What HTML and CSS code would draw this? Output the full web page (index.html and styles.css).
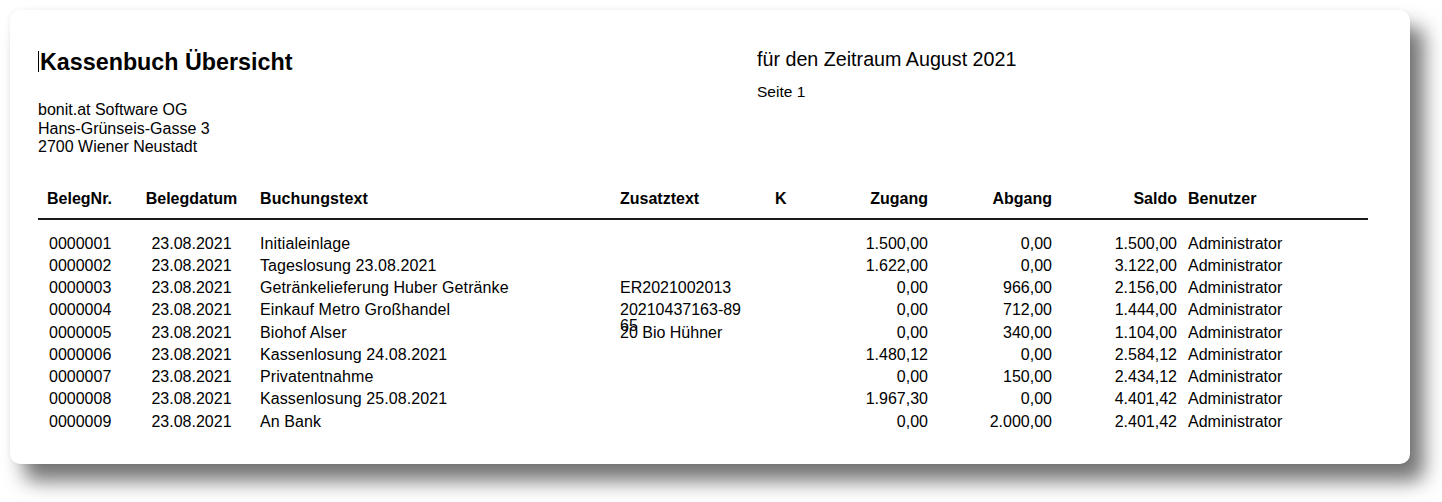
FILE: index.html
```html
<!DOCTYPE html>
<html lang="de">
<head>
    <meta charset="UTF-8">
    <title>Kassenbuch Übersicht</title>
    <link rel="stylesheet" href="styles.css">
</head>
<body>
    <div class="sheet">
        <div class="head">
            <div class="head-left">
                <h1 class="title"><span class="caret"></span>Kassenbuch Übersicht</h1>
                <div class="address">
                    <p>bonit.at Software OG</p>
                    <p>Hans-Grünseis-Gasse 3</p>
                    <p>2700 Wiener Neustadt</p>
                </div>
            </div>
            <div class="head-right">
                <p class="period">für den Zeitraum August 2021</p>
                <p class="page">Seite 1</p>
            </div>
        </div>

        <div class="row row-head">
            <div class="c-nr">BelegNr.</div>
            <div class="c-date">Belegdatum</div>
            <div class="c-text">Buchungstext</div>
            <div class="c-extra">Zusatztext</div>
            <div class="c-k">K</div>
            <div class="c-num">Zugang</div>
            <div class="c-num">Abgang</div>
            <div class="c-num">Saldo</div>
            <div class="c-user">Benutzer</div>
        </div>

        <div class="rows">
            <div class="row">
                <div class="c-nr">0000001</div>
                <div class="c-date">23.08.2021</div>
                <div class="c-text">Initialeinlage</div>
                <div class="c-extra"></div>
                <div class="c-k"></div>
                <div class="c-num">1.500,00</div>
                <div class="c-num">0,00</div>
                <div class="c-num">1.500,00</div>
                <div class="c-user">Administrator</div>
            </div>
            <div class="row">
                <div class="c-nr">0000002</div>
                <div class="c-date">23.08.2021</div>
                <div class="c-text">Tageslosung 23.08.2021</div>
                <div class="c-extra"></div>
                <div class="c-k"></div>
                <div class="c-num">1.622,00</div>
                <div class="c-num">0,00</div>
                <div class="c-num">3.122,00</div>
                <div class="c-user">Administrator</div>
            </div>
            <div class="row">
                <div class="c-nr">0000003</div>
                <div class="c-date">23.08.2021</div>
                <div class="c-text">Getränkelieferung Huber Getränke</div>
                <div class="c-extra">ER2021002013</div>
                <div class="c-k"></div>
                <div class="c-num">0,00</div>
                <div class="c-num">966,00</div>
                <div class="c-num">2.156,00</div>
                <div class="c-user">Administrator</div>
            </div>
            <div class="row">
                <div class="c-nr">0000004</div>
                <div class="c-date">23.08.2021</div>
                <div class="c-text">Einkauf Metro Großhandel</div>
                <div class="c-extra">20210437163-8965</div>
                <div class="c-k"></div>
                <div class="c-num">0,00</div>
                <div class="c-num">712,00</div>
                <div class="c-num">1.444,00</div>
                <div class="c-user">Administrator</div>
            </div>
            <div class="row">
                <div class="c-nr">0000005</div>
                <div class="c-date">23.08.2021</div>
                <div class="c-text">Biohof Alser</div>
                <div class="c-extra">20 Bio Hühner</div>
                <div class="c-k"></div>
                <div class="c-num">0,00</div>
                <div class="c-num">340,00</div>
                <div class="c-num">1.104,00</div>
                <div class="c-user">Administrator</div>
            </div>
            <div class="row">
                <div class="c-nr">0000006</div>
                <div class="c-date">23.08.2021</div>
                <div class="c-text">Kassenlosung 24.08.2021</div>
                <div class="c-extra"></div>
                <div class="c-k"></div>
                <div class="c-num">1.480,12</div>
                <div class="c-num">0,00</div>
                <div class="c-num">2.584,12</div>
                <div class="c-user">Administrator</div>
            </div>
            <div class="row">
                <div class="c-nr">0000007</div>
                <div class="c-date">23.08.2021</div>
                <div class="c-text">Privatentnahme</div>
                <div class="c-extra"></div>
                <div class="c-k"></div>
                <div class="c-num">0,00</div>
                <div class="c-num">150,00</div>
                <div class="c-num">2.434,12</div>
                <div class="c-user">Administrator</div>
            </div>
            <div class="row">
                <div class="c-nr">0000008</div>
                <div class="c-date">23.08.2021</div>
                <div class="c-text">Kassenlosung 25.08.2021</div>
                <div class="c-extra"></div>
                <div class="c-k"></div>
                <div class="c-num">1.967,30</div>
                <div class="c-num">0,00</div>
                <div class="c-num">4.401,42</div>
                <div class="c-user">Administrator</div>
            </div>
            <div class="row">
                <div class="c-nr">0000009</div>
                <div class="c-date">23.08.2021</div>
                <div class="c-text">An Bank</div>
                <div class="c-extra"></div>
                <div class="c-k"></div>
                <div class="c-num">0,00</div>
                <div class="c-num">2.000,00</div>
                <div class="c-num">2.401,42</div>
                <div class="c-user">Administrator</div>
            </div>
        </div>
    </div>
</body>
</html>
```

FILE: styles.css
```css
* {
    margin: 0;
    padding: 0;
    box-sizing: border-box;
}
html{
    background: #fff;
}
body{
    min-height: 502px;
    padding: 10px 10px 38px;
    font-family: "Liberation Sans", Arial, sans-serif;
    color: #000;
}
.sheet{
    width: 1400px;
    background: #fff;
    border-radius: 10px;
    padding: 39px 42px 31px 28px;
    box-shadow: 14px 17px 20px rgba(0,0,0,0.55), 0 0 5px rgba(0,0,0,0.06);
}
.head{
    display: flex;
}
.head-left{
    width: 719px;
}
.title{
    font-size: 23.3px;
    line-height: 26px;
    font-weight: bold;
}
.caret{
    display: inline-block;
    width: 1px;
    height: 21px;
    background: #000;
    vertical-align: -2px;
    margin-right: 1px;
}
.address{
    margin-top: 26px;
    font-size: 16px;
    line-height: 18.5px;
}
.head-right{
    margin-top: -1px;
}
.period{
    font-size: 19.7px;
    line-height: 23px;
}
.page{
    margin-top: 12px;
    font-size: 15.5px;
    line-height: 18px;
}
.row{
    display: grid;
    grid-template-columns: 102px 103px 377px 155px 35px 118px 124px 125px 191px;
    align-items: baseline;
    height: 22.25px;
    font-size: 16px;
    line-height: 22.25px;
}
.row-head{
    margin-top: 32px;
    height: auto;
    line-height: 20px;
    font-weight: bold;
    padding-bottom: 9px;
    border-bottom: 2px solid #1a1a1a;
}
.rows{
    margin-top: 13px;
}
.c-nr{
    padding-left: 11px;
}
.row-head .c-nr{
    padding-left: 9px;
}
.c-date{
    text-align: center;
}
.c-text{
    padding-left: 17px;
    white-space: nowrap;
    letter-spacing: 0.1px;
}
.c-extra{
    width: 125px;
    line-height: 16px;
    word-break: break-all;
}
.row-head .c-extra{
    width: auto;
    line-height: 20px;
}
.c-num{
    text-align: right;
}
.c-user{
    padding-left: 11px;
}
```
